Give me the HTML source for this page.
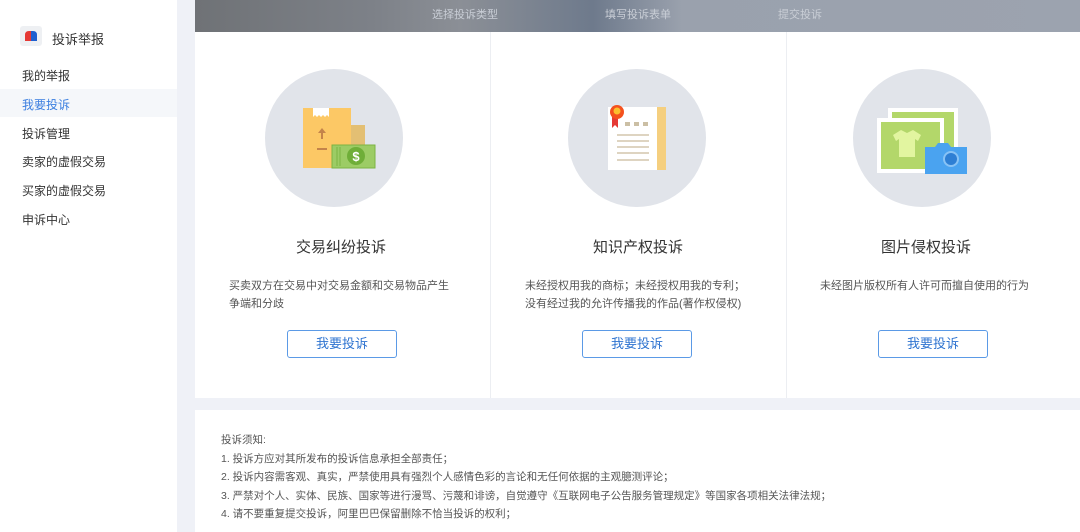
<!DOCTYPE html>
<html><head><meta charset="utf-8"><style>
*{margin:0;padding:0;box-sizing:border-box}
body{width:1080px;height:532px;overflow:hidden;background:#eff1f7;font-family:"Liberation Sans","Noto Sans CJK SC",sans-serif;position:relative;color:#333}
.a{position:absolute;white-space:nowrap}
#side{left:0;top:0;width:177px;height:532px;background:#fff}
.mi{left:22px;font-size:12px;color:#333}
#hdr{left:195px;top:0;width:885px;height:32px;background:linear-gradient(90deg,#6f7276 0%,#7d8188 20%,#8b8f96 30%,#6e7a8c 45%,#9aa1ad 55%,#9ca3af 100%)}
.st{top:6px;font-size:11px;color:#c9ced6}
#cards{left:195px;top:32px;width:885px;height:366px;background:#fff}
.vl{top:32px;width:1px;height:366px;background:#eceef2}
.circ{width:138px;height:138px;border-radius:50%;background:#e1e4ea;top:69px}
.tt{top:236px;font-size:15px;color:#333;transform:translateX(-50%)}
.ds{font-size:11px;color:#555;line-height:18px}
.btn{top:330px;width:110px;height:28px;border:1px solid #5b9ae6;border-radius:3px;color:#2f74d0;font-size:13px;text-align:center;line-height:26px;background:#fff}
#note{left:195px;top:410px;width:885px;height:122px;background:#fff}
.nl{left:221px;font-size:10.5px;color:#555}
</style></head><body>
<div class="a" id="side"></div>
<svg class="a" style="left:20px;top:26px" width="22" height="20"><rect x="0" y="0" width="22" height="20" rx="3" fill="#eef0f3"/><path d="M5 15 L5 9 Q5 5 9 5 L11 5 L11 15Z" fill="#e53935"/><path d="M11 5 L13 5 Q17 5 17 9 L17 15 L11 15Z" fill="#1e5fd0"/></svg>
<div class="a" style="left:52px;top:29px;font-size:13px;color:#333">投诉举报</div>
<div class="a mi" style="top:67px">我的举报</div>
<div class="a" style="left:0;top:89px;width:177px;height:28px;background:#f5f7fa"></div>
<div class="a mi" style="top:96px;color:#3a7ee0">我要投诉</div>
<div class="a mi" style="top:125px">投诉管理</div>
<div class="a mi" style="top:153px">卖家的虚假交易</div>
<div class="a mi" style="top:182px">买家的虚假交易</div>
<div class="a mi" style="top:211px">申诉中心</div>

<div class="a" id="hdr"></div>
<div class="a st" style="left:432px">选择投诉类型</div>
<div class="a st" style="left:605px">填写投诉表单</div>
<div class="a st" style="left:778px">提交投诉</div>

<div class="a" id="cards"></div>
<div class="a vl" style="left:490px"></div>
<div class="a vl" style="left:786px"></div>

<div class="a circ" style="left:265px"></div>
<div class="a circ" style="left:568px"></div>
<div class="a circ" style="left:853px"></div>

<svg class="a" style="left:0;top:0" width="1080" height="200">
 <rect x="303" y="108" width="48" height="60" fill="#fcc865"/>
 <rect x="351" y="125" width="14" height="25" fill="#e3bf73"/>
 <path d="M313 108h16v9l-2 -2-2 2-2-2-2 2-2-2-2 2-2-2-2 2z" fill="#fff"/>
 <path d="M322 128 l-4 5h3v6h2v-6h3z" fill="#c4844a"/>
 <rect x="317" y="148" width="10" height="2" fill="#c4844a"/>
 <rect x="332" y="145" width="43" height="23" fill="#9ccc65" stroke="#7cb342" stroke-width="1"/>
 <line x1="337" y1="147" x2="337" y2="166" stroke="#7cb342"/><line x1="340" y1="147" x2="340" y2="166" stroke="#7cb342"/>
 <circle cx="356" cy="156" r="9" fill="#6fae38"/>
 <text x="356" y="161" font-size="13" font-weight="bold" fill="#fff" text-anchor="middle" font-family="Liberation Sans">$</text>

 <rect x="608" y="107" width="50" height="63" fill="#fff"/>
 <rect x="657" y="107" width="9" height="63" fill="#f5cf7f"/>
 <path d="M612 115 l0 13 3-3 3 3 0-13z" fill="#e53935"/>
 <circle cx="617" cy="112" r="7" fill="#f4511e"/><circle cx="617" cy="111" r="3.5" fill="#fbc02d"/>
 <rect x="625" y="122" width="5" height="4" fill="#cbbfa4"/><rect x="634" y="122" width="5" height="4" fill="#cbbfa4"/><rect x="643" y="122" width="5" height="4" fill="#cbbfa4"/>
 <g stroke="#c9bb9c" stroke-width="1.2"><line x1="617" y1="135" x2="649" y2="135"/><line x1="617" y1="141" x2="649" y2="141"/><line x1="617" y1="147" x2="649" y2="147"/><line x1="617" y1="153" x2="649" y2="153"/><line x1="617" y1="160" x2="649" y2="160"/></g>

 <rect x="888" y="108" width="70" height="46" fill="#fff"/>
 <rect x="892" y="112" width="62" height="38" fill="#b3d76a"/>
 <rect x="877" y="118" width="67" height="55" fill="#fff"/>
 <rect x="881" y="122" width="59" height="47" fill="#b3d76a"/>
 <path d="M901 130 l-8 5 3 6 3-2 v18 h16 v-18 l3 2 3-6 -8-5 -6 3z" fill="#e2f5a0"/>
 <rect x="925" y="147" width="42" height="27" fill="#4aa3f0"/>
 <path d="M935 147 l3-4 h10 l3 4z" fill="#4aa3f0"/>
 <circle cx="951" cy="159" r="8" fill="#fff" opacity=".35"/><circle cx="951" cy="159" r="6" fill="#2e7fd4"/>
</svg>

<div class="a tt" style="left:341px">交易纠纷投诉</div>
<div class="a tt" style="left:638px">知识产权投诉</div>
<div class="a tt" style="left:926px">图片侵权投诉</div>

<div class="a ds" style="left:229px;top:277px">买卖双方在交易中对交易金额和交易物品产生<br>争端和分歧</div>
<div class="a ds" style="left:525px;top:277px">未经授权用我的商标；未经授权用我的专利；<br>没有经过我的允许传播我的作品(著作权侵权)</div>
<div class="a ds" style="left:820px;top:277px">未经图片版权所有人许可而擅自使用的行为</div>

<div class="a btn" style="left:287px">我要投诉</div>
<div class="a btn" style="left:582px">我要投诉</div>
<div class="a btn" style="left:878px">我要投诉</div>

<div class="a" id="note"></div>
<div class="a nl" style="top:432px">投诉须知:</div>
<div class="a nl" style="top:451px">1. 投诉方应对其所发布的投诉信息承担全部责任；</div>
<div class="a nl" style="top:469px">2. 投诉内容需客观、真实，严禁使用具有强烈个人感情色彩的言论和无任何依据的主观臆测评论；</div>
<div class="a nl" style="top:488px">3. 严禁对个人、实体、民族、国家等进行漫骂、污蔑和诽谤，自觉遵守《互联网电子公告服务管理规定》等国家各项相关法律法规；</div>
<div class="a nl" style="top:506px">4. 请不要重复提交投诉，阿里巴巴保留删除不恰当投诉的权利；</div>
</body></html>
